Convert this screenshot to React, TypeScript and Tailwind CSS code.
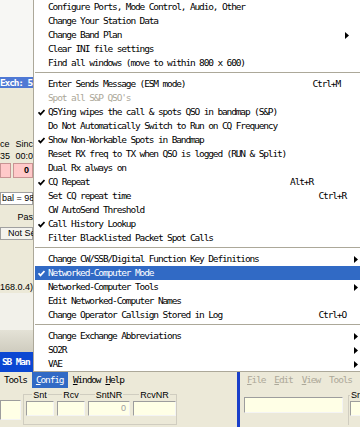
import type { ReactNode } from "react";

const mono = "font-['DejaVu_Sans_Mono','Liberation_Mono',monospace] text-[9.5px] tracking-[-1.14px]";
const sans = "font-['Liberation_Sans',Arial,sans-serif] text-[9px]";

type Item = {
  label: string;
  check?: boolean;
  disabled?: boolean;
  active?: boolean;
  keys?: string;
  keysCls?: string;
  sub?: string;
};

const groups: Item[][] = [
  [
    { label: "Configure Ports, Mode Control, Audio, Other" },
    { label: "Change Your Station Data" },
    { label: "Change Band Plan", sub: "mr-[11px]" },
    { label: "Clear INI file settings" },
    { label: "Find all windows (move to within 800 x 600)" },
  ],
  [
    { label: "Enter Sends Message (ESM mode)", keys: "Ctrl+M", keysCls: "mr-[20px]" },
    { label: "Spot all S&P QSO's", disabled: true },
    { label: "QSYing wipes the call & spots QSO in bandmap (S&P)", check: true },
    { label: "Do Not Automatically Switch to Run on CQ Frequency" },
    { label: "Show Non-Workable Spots in Bandmap", check: true },
    { label: "Reset RX freq to TX when QSO is logged (RUN & Split)" },
    { label: "Dual Rx always on" },
    { label: "CQ Repeat", check: true, keys: "Alt+R", keysCls: "mr-[47px]" },
    { label: "Set CQ repeat time", keys: "Ctrl+R", keysCls: "mr-[14px]" },
    { label: "CW AutoSend Threshold" },
    { label: "Call History Lookup", check: true },
    { label: "Filter Blacklisted Packet Spot Calls" },
  ],
  [
    { label: "Change CW/SSB/Digital Function Key Definitions", sub: "mr-[2px]" },
    { label: "Networked-Computer Mode", check: true, active: true },
    { label: "Networked-Computer Tools", sub: "mr-[2px]" },
    { label: "Edit Networked-Computer Names" },
    { label: "Change Operator Callsign Stored in Log", keys: "Ctrl+O", keysCls: "mr-[14px]" },
  ],
  [
    { label: "Change Exchange Abbreviations", sub: "mr-[2px]" },
    { label: "SO2R", sub: "mr-[2px]" },
    { label: "VAE", sub: "mr-[2px]" },
  ],
];

function Check() {
  return (
    <svg width="7" height="7" viewBox="0 0 7 7" className="block">
      <polyline points="0.5,3.2 2.5,5.4 6.5,1" fill="none" stroke="currentColor" strokeWidth="1.7" />
    </svg>
  );
}

function Arrow({ className }: { className: string }) {
  return (
    <svg width="4" height="7" viewBox="0 0 4 7" className={`ml-auto block ${className}`}>
      <polygon points="0,0 4,3.5 0,7" fill="currentColor" />
    </svg>
  );
}

function MenuRow({ it }: { it: Item }) {
  const tone = it.active
    ? "bg-[#316ac5] text-white"
    : it.disabled
      ? "text-[#aca899]"
      : "text-black";
  return (
    <div className={`flex h-[14px] items-center whitespace-nowrap ${tone}`}>
      <span className="flex w-[13px] shrink-0 pl-[3px]">{it.check && <Check />}</span>
      <span>{it.label}</span>
      {it.keys && <span className={`ml-auto ${it.keysCls}`}>{it.keys}</span>}
      {it.sub && <Arrow className={it.sub} />}
    </div>
  );
}

function Field({ className, children }: { className: string; children?: ReactNode }) {
  return (
    <div
      className={`border border-t-[#9d9d9d] border-l-[#9d9d9d] border-r-[#f4f4f4] border-b-[#f4f4f4] bg-[#ffffe6] ${className}`}
    >
      {children}
    </div>
  );
}

export default function App() {
  return (
    <div className={`flex h-[427px] w-[360px] flex-col overflow-hidden bg-[#ece9d8] ${sans}`}>
      {/* top: app behind + open Config menu */}
      <div className="flex h-[372px]">
        <div className="flex w-[33px] shrink-0 flex-col overflow-hidden whitespace-nowrap">
          <div className="h-[77px] bg-[#f7f7f4]" />
          <div className={`h-[11px] bg-[#4f79d4] font-bold leading-[11px] text-white ${mono}`}>Exch: 5</div>
          <div className="h-[50px] bg-[#ece9d8]" />
          <div className="flex h-[13px] items-center justify-between">
            <span>ce</span>
            <span>Sinc</span>
          </div>
          <div className="flex h-[12px] items-center justify-between">
            <span>35</span>
            <span>00:0</span>
          </div>
          <div className="flex h-[15px] gap-[2px]">
            <div className="w-[11px] border border-[#c89494] bg-[#ffc9c9]" />
            <div className="flex-1 border border-[#c89494] bg-[#ffc9c9] pr-[3px] text-right font-bold leading-[13px]">0</div>
          </div>
          <div className="h-[14px]" />
          <div className="flex h-[13px] items-center border border-[#a0a0a0] bg-white pl-[1px]">bal = 98</div>
          <div className="h-[6px]" />
          <div className="h-[13px] text-right leading-[13px]">Pas</div>
          <div className="h-[3px]" />
          <div className="flex h-[13px] items-center border border-[#a0a0a0] bg-[#f4f3ee] pl-[7px]">Not Se</div>
          <div className="h-[41px]" />
          <div className="h-[12px] leading-[12px]">168.0.4)</div>
          <div className="h-[37px] bg-[#f2f1ea]" />
          <div className="h-[22px] bg-gradient-to-b from-[#e4e2d6] to-[#cfccbf]" />
          <div className={`h-[19px] bg-[#0b47d2] pl-[2px] font-bold leading-[19px] text-white ${mono}`}>SB Man</div>
          <div className="h-px bg-[#0b47d2]" />
        </div>

        <div className={`flex-1 border-b border-l border-[#aca899] bg-white pl-[1px] ${mono}`}>
          {groups.map((g, gi) => (
            <div key={gi}>
              {gi > 0 && (
                <div className="h-[7px] pt-[2px]">
                  <div className="h-px bg-[#aca899]" />
                </div>
              )}
              {g.map((it) => (
                <MenuRow key={it.label} it={it} />
              ))}
            </div>
          ))}
        </div>
      </div>

      {/* bottom: two logger windows */}
      <div className="flex flex-1">
        <div className="flex w-[237px] shrink-0 flex-col">
          <div className={`flex h-[16px] items-center whitespace-nowrap ${mono}`}>
            <span className="pl-[4px]">Tools</span>
            <span className="ml-[5px] flex h-[16px] w-[36px] items-center bg-[#316ac5] pl-[4px] text-white">
              <span className="underline">C</span>onfig
            </span>
            <span className="ml-[5px]">
              <span className="underline">W</span>indow
            </span>
            <span className="ml-[5px]">
              <span className="underline">H</span>elp
            </span>
          </div>
          <div className="flex flex-1 items-start pt-[6px]">
            <Field className="mt-[6px] h-[20px] w-[21px]" />
            <div className="ml-[2px] flex h-[31px] w-[154px] gap-[3px] border border-[#d0cdc0] px-[2px] pt-[1px]">
              {[
                { l: "Snt", w: "w-[28px]" },
                { l: "Rcv", w: "w-[28px]" },
                { l: "SntNR", w: "w-[42px]", v: "0" },
                { l: "RcvNR", w: "w-[43px]" },
              ].map((f) => (
                <div key={f.l} className="flex flex-col items-center">
                  <span className="-mt-[6px] bg-[#ece9d8] px-[1px] leading-[10px]">{f.l}</span>
                  <Field className={`mt-[1px] h-[15px] ${f.w} pr-[3px] text-right leading-[13px] text-[#a0a0a0]`}>
                    {f.v}
                  </Field>
                </div>
              ))}
            </div>
          </div>
        </div>
        <div className="w-[3px] shrink-0 bg-[#1a3fc9]" />
        <div className="flex flex-1 flex-col overflow-hidden">
          <div className={`flex h-[16px] items-center gap-[9px] whitespace-nowrap pl-[7px] text-[#aca899] ${mono}`}>
            <span><span className="underline">F</span>ile</span>
            <span><span className="underline">E</span>dit</span>
            <span><span className="underline">V</span>iew</span>
            <span>Tools</span>
          </div>
          <div className="flex items-start pt-[7px]">
            <Field className="ml-[4px] mt-[2px] h-[16px] w-[99px] shrink-0" />
            <div className="ml-[5px] flex h-[30px] flex-1 flex-col border-l border-t border-[#d0cdc0] pl-[1px]">
              <span className="-mt-[6px] bg-[#ece9d8] px-[1px] leading-[10px]">Sn</span>
              <Field className="mt-[1px] h-[15px] w-full" />
            </div>
          </div>
        </div>
      </div>
    </div>
  );
}
